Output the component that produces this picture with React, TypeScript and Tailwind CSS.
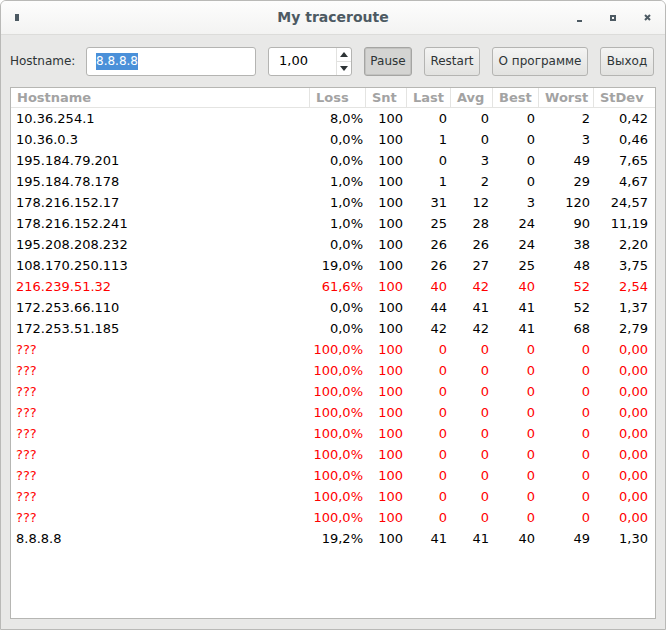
import React from 'react';

type Row = { host: string; loss: string; snt: string; last: string; avg: string; best: string; worst: string; stdev: string; bad?: boolean };

const rows: Row[] = [
  { host: '10.36.254.1', loss: '8,0%', snt: '100', last: '0', avg: '0', best: '0', worst: '2', stdev: '0,42' },
  { host: '10.36.0.3', loss: '0,0%', snt: '100', last: '1', avg: '0', best: '0', worst: '3', stdev: '0,46' },
  { host: '195.184.79.201', loss: '0,0%', snt: '100', last: '0', avg: '3', best: '0', worst: '49', stdev: '7,65' },
  { host: '195.184.78.178', loss: '1,0%', snt: '100', last: '1', avg: '2', best: '0', worst: '29', stdev: '4,67' },
  { host: '178.216.152.17', loss: '1,0%', snt: '100', last: '31', avg: '12', best: '3', worst: '120', stdev: '24,57' },
  { host: '178.216.152.241', loss: '1,0%', snt: '100', last: '25', avg: '28', best: '24', worst: '90', stdev: '11,19' },
  { host: '195.208.208.232', loss: '0,0%', snt: '100', last: '26', avg: '26', best: '24', worst: '38', stdev: '2,20' },
  { host: '108.170.250.113', loss: '19,0%', snt: '100', last: '26', avg: '27', best: '25', worst: '48', stdev: '3,75' },
  { host: '216.239.51.32', loss: '61,6%', snt: '100', last: '40', avg: '42', best: '40', worst: '52', stdev: '2,54', bad: true },
  { host: '172.253.66.110', loss: '0,0%', snt: '100', last: '44', avg: '41', best: '41', worst: '52', stdev: '1,37' },
  { host: '172.253.51.185', loss: '0,0%', snt: '100', last: '42', avg: '42', best: '41', worst: '68', stdev: '2,79' },
  ...Array.from({ length: 9 }, () => ({ host: '???', loss: '100,0%', snt: '100', last: '0', avg: '0', best: '0', worst: '0', stdev: '0,00', bad: true })),
  { host: '8.8.8.8', loss: '19,2%', snt: '100', last: '41', avg: '41', best: '40', worst: '49', stdev: '1,30' },
];

const headers = ['Hostname', 'Loss', 'Snt', 'Last', 'Avg', 'Best', 'Worst', 'StDev'];
const grid = 'grid grid-cols-[299px_56px_41px_44px_42px_46px_55px_61px]';

function Btn({ children, pressed, w }: { children: React.ReactNode; pressed?: boolean; w: string }) {
  return (
    <button
      type="button"
      className={`${w} h-[29px] whitespace-nowrap rounded-[3px] text-[12px] text-[#2e3436] border ${
        pressed
          ? 'border-[#a5a5a3] bg-[#d4d4d2] shadow-[inset_0_0_0_1px_#c2c2c0]'
          : 'border-[#b4b4b2] bg-gradient-to-b from-[#f4f4f3] to-[#e2e2e0]'
      }`}
    >
      {children}
    </button>
  );
}

export default function App() {
  return (
    <div className="w-[666px] h-[630px] bg-[#e8e8e7] flex flex-col border border-[#b9b9b7] rounded-t-[6px] overflow-hidden font-['DejaVu_Sans',sans-serif] text-[#2e3436]">
      {/* title bar */}
      <div className="h-[34px] shrink-0 bg-gradient-to-b from-[#fdfdfd] to-[#f3f3f2] border-b border-[#dcdcda] flex items-center px-[14px] relative">
        <div className="w-[4px] h-[7px] bg-[#4d5a63]" />
        <div className="absolute left-0 right-0 text-center font-bold text-[14px] text-[#4d5a63] pointer-events-none">My traceroute</div>
        <div className="ml-auto flex items-center gap-[28px]">
          <div className="w-[5px] h-[2px] bg-[#4d5a63] mt-[6px]" />
          <div className="w-[6px] h-[6px] border-2 border-[#4d5a63]" />
          <svg width="7" height="7" viewBox="0 0 7 7">
            <path d="M1 1 L6 6 M6 1 L1 6" stroke="#4d5a63" strokeWidth="2" />
          </svg>
        </div>
      </div>

      {/* toolbar */}
      <div className="flex items-center h-[52px] px-[9px] text-[12px]">
        <span className="w-[76px] shrink-0">Hostname:</span>
        <div className="w-[170px] h-[29px] bg-white border border-[#b4b4b2] rounded-[3px] flex items-center px-[9px]">
          <span className="bg-[#4a90d9] text-white leading-[17px]">8.8.8.8</span>
        </div>
        <div className="ml-[12px] w-[84px] h-[29px] bg-white border border-[#b4b4b2] rounded-[3px] flex">
          <div className="flex-1 flex items-center pl-[10px] text-black text-[13px]">1,00</div>
          <div className="w-[15px] flex flex-col border-l border-[#e2e2e0]">
            <div className="flex-1 flex items-center justify-center border-b border-[#e2e2e0]">
              <svg width="8" height="5" viewBox="0 0 8 5"><path d="M0 5 L4 0 L8 5 Z" fill="#2e3436" /></svg>
            </div>
            <div className="flex-1 flex items-center justify-center">
              <svg width="8" height="5" viewBox="0 0 8 5"><path d="M0 0 L4 5 L8 0 Z" fill="#2e3436" /></svg>
            </div>
          </div>
        </div>
        <div className="ml-[12px] flex gap-[12px]">
          <Btn pressed w="w-[48px]">Pause</Btn>
          <Btn w="w-[56px]">Restart</Btn>
          <Btn w="w-[96px]">О программе</Btn>
          <Btn w="w-[54px]">Выход</Btn>
        </div>
      </div>

      {/* table */}
      <div className="mx-[9px] mb-[10px] flex-1 bg-white border border-[#b6b6b3] text-[13px]">
        <div className={`${grid} h-[20px] border-b border-[#e4e4e2] font-bold text-[#a3a3a3]`}>
          {headers.map((h, i) => (
            <div key={h} className={`flex items-center pl-[6px] ${i < headers.length - 1 ? 'border-r border-[#e4e4e2]' : ''}`}>
              {h}
            </div>
          ))}
        </div>
        {rows.map((r, idx) => (
          <div key={idx} className={`${grid} h-[21px] items-center ${r.bad ? 'text-[#ff0000]' : 'text-black'}`}>
            <div className="pl-[5px]">{r.host}</div>
            <div className="text-right pr-[3px]">{r.loss}</div>
            <div className="text-right pr-[4px]">{r.snt}</div>
            <div className="text-right pr-[4px]">{r.last}</div>
            <div className="text-right pr-[4px]">{r.avg}</div>
            <div className="text-right pr-[4px]">{r.best}</div>
            <div className="text-right pr-[4px]">{r.worst}</div>
            <div className="text-right pr-[7px]">{r.stdev}</div>
          </div>
        ))}
      </div>
    </div>
  );
}
